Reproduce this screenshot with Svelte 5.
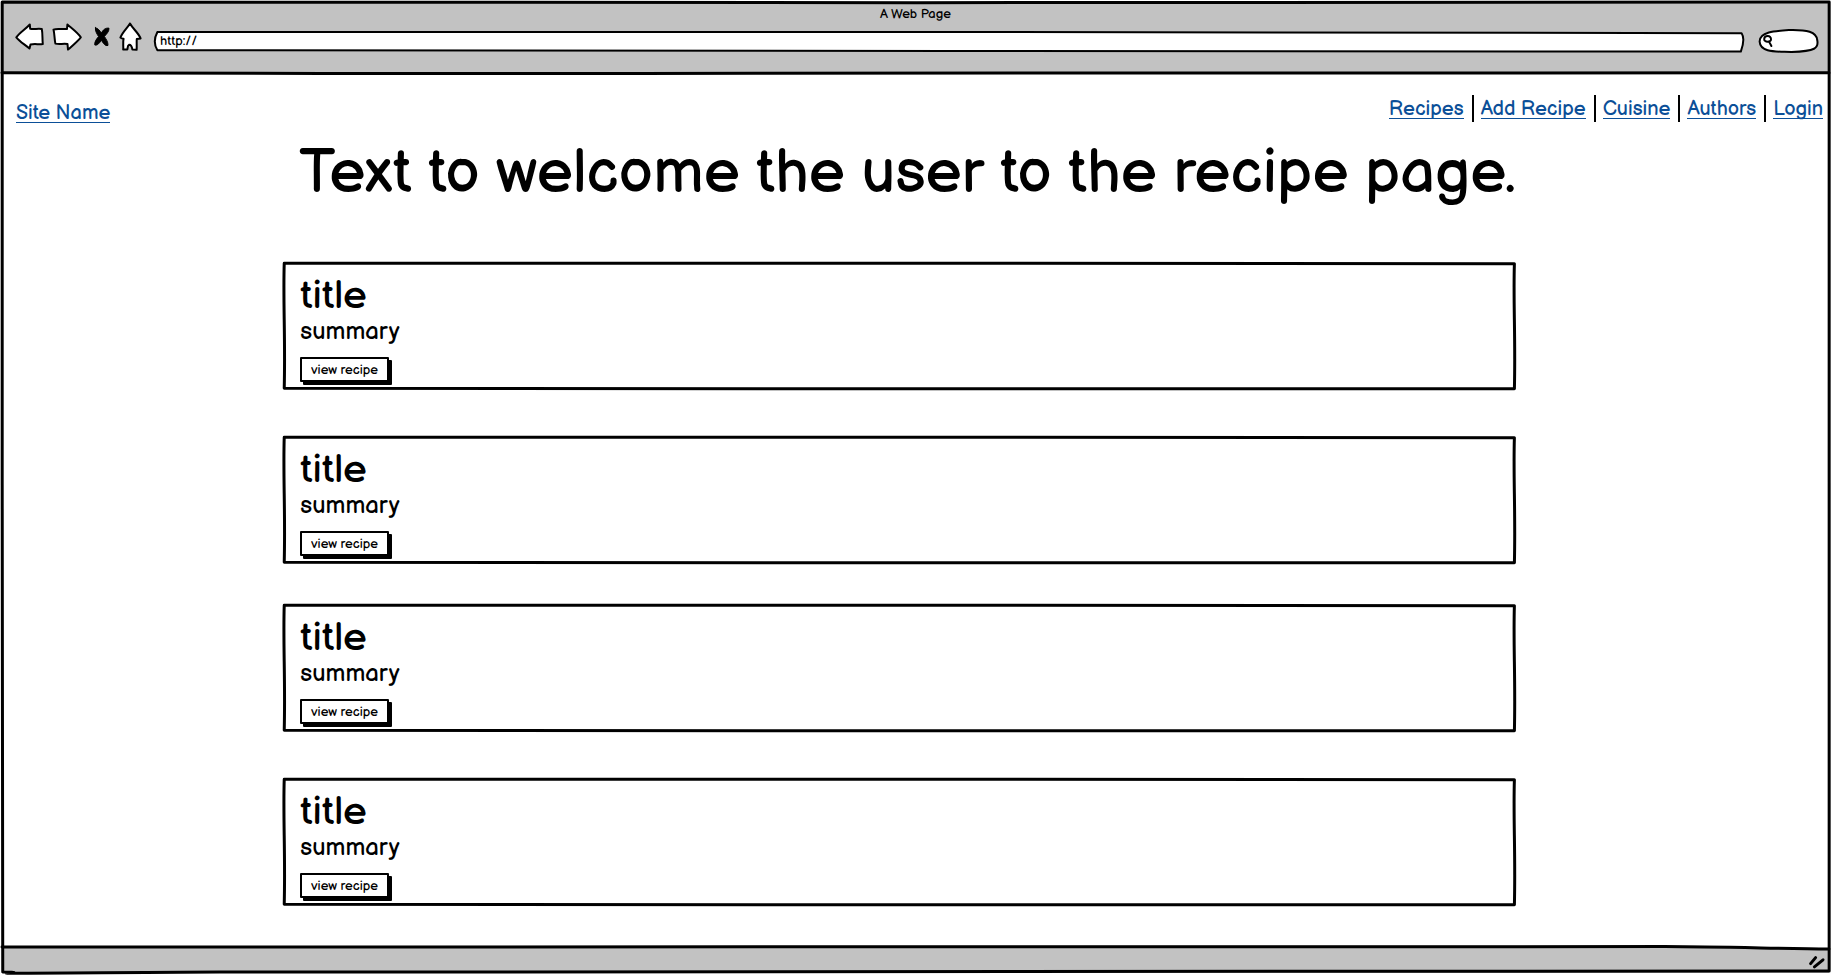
<script>
  const links = ['Recipes', 'Add Recipe', 'Cuisine', 'Authors', 'Login'];
  const recipes = [
    { title: 'title', summary: 'summary' },
    { title: 'title', summary: 'summary' },
    { title: 'title', summary: 'summary' },
    { title: 'title', summary: 'summary' }
  ];
  let address = $state('http://');
  let query = $state('');
</script>

{#snippet outline(d, fill)}
  <svg class="outline" viewBox="0 0 100 100" preserveAspectRatio="none" aria-hidden="true">
    <path {d} {fill} vector-effect="non-scaling-stroke" />
  </svg>
{/snippet}

<div class="browser">
  <header class="chrome">
    <div class="caption">A Web Page</div>
    <div class="toolbar">
      <button class="tool back" aria-label="Back">
        <svg width="30" height="30" viewBox="0 0 30 30">
          <path d="M2.3 15.3 C6 10.5 11 7.6 15.8 2.5 L16.2 6.8 C20 7.5 24 6.3 27.8 7 C28.8 12 28.2 17 28.8 22 C25 22.6 21 21.6 16.5 22.4 L15.5 26.6 C11 22.5 6 20 2.3 15.3Z" />
        </svg>
      </button>
      <button class="tool forward" aria-label="Forward">
        <svg width="30" height="30" viewBox="0 0 30 30">
          <path d="M1.5 7.6 C5 6 10 7.6 15 7 L15.4 2.5 C20 6.5 25.6 10.5 28.8 15.3 C25 20 20.5 23.5 16 27.6 L15.5 22 C11 21.4 7 22.6 3.4 21.6 C2.4 17 2.6 12 1.5 7.6Z" />
        </svg>
      </button>
      <button class="tool stop" aria-label="Stop">
        <svg width="18" height="22" viewBox="0 0 18 22">
          <path class="solid" d="M2.4 1.8 C5 2.2 6.6 4.5 8.4 7 C10 4.2 12 1.6 16 2.2 C16.2 5.6 13.4 8.2 11.4 10.4 C12.8 13 15.2 15.6 15 19.4 C12.2 20.6 10 16.6 8.4 14.4 C6.6 16.6 4.6 19.8 1.8 19 C1.4 15.4 3.6 13 5.6 10.6 C4 8 2 5.2 2.4 1.8Z" />
        </svg>
      </button>
      <button class="tool home" aria-label="Home">
        <svg width="24" height="30" viewBox="0 0 24 30">
          <path d="M12 1.5 C9.5 6 4.6 10 2.4 15.6 C3.4 16.6 4.6 16.6 5.6 16.8 C4.6 20.4 5.6 24 5.2 27.6 L9.4 27.4 C9.8 25.4 9.4 23.6 11 22.8 C13.4 22.6 14 25 14.4 27.6 L18.6 27.8 C19 24 18.4 20.4 18.8 17 L22.6 16.4 C20.6 11 15 7 12 1.5Z" />
        </svg>
      </button>
      <div class="address">
        {@render outline('M0.15 0 C15 0 30 -2 50 0 S85 3 99.85 6 C100.05 30 99.95 65 99.8 98 C80 97 65 96 50 95 S20 92 0.15 91 C-0.05 65 -0.05 30 0.15 0Z', '#fff')}
        <input aria-label="Address" bind:value={address} />
      </div>
      <div class="search">
        {@render outline('M1 52 C1 12 26 8 50 4 C80 2 96 12 97 46 C100 80 94 92 54 96 C30 93 2 100 1 52Z', '#fff')}
        <svg class="lens" width="12" height="14" viewBox="0 0 12 14" aria-hidden="true">
          <path d="M9 5.4 C9 8.4 2 8.6 2.2 5 C2.4 1 9.4 1 9 5.4 M7 7.6 L9.4 12" />
        </svg>
        <input aria-label="Search" bind:value={query} />
      </div>
    </div>
    <svg class="rule" viewBox="0 0 100 4" preserveAspectRatio="none" aria-hidden="true">
      <path d="M0 1.8 C15 2 20 3 35 2.4 S60 2.6 100 1.8" vector-effect="non-scaling-stroke" />
    </svg>
  </header>

  <div class="page">
    <div class="topbar">
      <a class="link site" href="#home">Site Name</a>
      <nav>
        {#each links as name}
          <div class="item"><a class="link" href={'#' + name}>{name}</a></div>
        {/each}
      </nav>
    </div>

    <main>
      <h1>Text to welcome the user to the recipe page.</h1>
      {#each recipes as recipe}
        <article>
          {@render outline('M0.1 1 C30 0.2 70 1.4 99.85 1.4 C99.75 30 99.95 60 99.85 99 C70 98.6 30 99.6 0.1 98.6 C0.2 60 0 30 0.1 1Z', 'none')}
          <h2>{recipe.title}</h2>
          <p>{recipe.summary}</p>
          <button class="view">view recipe</button>
        </article>
      {/each}
    </main>
  </div>

  <footer>
    <svg class="rule" viewBox="0 0 100 4" preserveAspectRatio="none" aria-hidden="true">
      <path class="band" d="M0 1 L92 0.4 L100 3 L100 4 L0 4Z" />
      <path d="M0 2 C30 2.6 60 1.4 91 1.6 C94 1.8 97 3.4 100 4" vector-effect="non-scaling-stroke" />
    </svg>
    <svg class="grip" width="18" height="16" viewBox="0 0 18 16" aria-hidden="true">
      <path d="M2.6 9.6 L7.6 3.6 M6.4 12.8 L15 5.8" />
    </svg>
  </footer>
  {@render outline('M0.12 0.2 C30 0.3 70 0.3 99.9 0.2 C99.8 30 100 70 99.9 99.6 C70 99.7 30 99.5 12 99.7 S3 99.8 0.15 99.7 C0.15 70 0.08 30 0.12 0.2Z', 'none')}
</div>

<style>
  :global(body) {
    background: #fff;
  }
  .browser {
    position: relative;
    display: flex;
    flex-direction: column;
    box-sizing: border-box;
    min-height: 100vh;
    padding: 2px;
    font-family: 'Balsamiq Sans', Lato, sans-serif;
    color: #000;
  }
  button,
  input {
    margin: 0;
    padding: 0;
    border: 0;
    background: none;
    font-family: inherit;
    color: inherit;
    outline: none;
  }
  svg {
    display: block;
  }
  .outline {
    position: absolute;
    inset: 0;
    width: 100%;
    height: 100%;
    overflow: visible;
    pointer-events: none;
  }
  path {
    stroke: #000;
    stroke-width: 3px;
    stroke-linejoin: round;
    stroke-linecap: round;
  }
  .chrome {
    background: #c2c2c2;
  }
  .caption {
    padding-top: 4px;
    text-align: center;
    font-size: 13px;
    line-height: 16px;
  }
  .toolbar {
    display: flex;
    align-items: center;
    height: 30px;
    padding: 0 10px 19px 12px;
  }
  .tool path {
    fill: #fff;
    stroke-width: 2px;
  }
  .tool path.solid {
    fill: #000;
    stroke-width: 1px;
  }
  .forward {
    margin-left: 8px;
  }
  .stop {
    margin-left: 11px;
  }
  .home {
    margin-left: 7px;
  }
  .address {
    position: relative;
    flex: 1;
    height: 20px;
    margin: 9px 15px 0 13px;
  }
  .address path,
  .search path {
    stroke-width: 2px;
  }
  .address input {
    position: relative;
    display: block;
    box-sizing: border-box;
    width: 100%;
    height: 18px;
    padding-left: 5px;
    font-size: 13px;
  }
  .search {
    position: relative;
    display: flex;
    align-items: center;
    width: 60px;
    height: 24px;
    margin-top: 8px;
  }
  .search input {
    position: relative;
    width: 36px;
    font-size: 13px;
  }
  .lens {
    position: relative;
    flex: none;
    margin-left: 3px;
    fill: none;
  }
  .rule {
    width: 100%;
    height: 4px;
    overflow: visible;
    fill: none;
  }
  .chrome .rule {
    background: linear-gradient(#c2c2c2 50%, #fff 50%);
  }
  .page {
    flex: 1;
  }
  .topbar {
    display: flex;
    justify-content: space-between;
    align-items: flex-start;
    padding: 20px 6px 0 14px;
  }
  .link {
    display: block;
    border-bottom: 1px solid #0b4f98;
    font-size: 20px;
    line-height: 18px;
    color: #0b4f98;
    text-decoration: none;
  }
  .site {
    margin-top: 9px;
  }
  nav {
    display: flex;
  }
  .item {
    height: 22px;
    padding: 5px 0 0 7px;
  }
  .item + .item {
    margin-left: 8px;
    border-left: 2px solid #000;
  }
  main {
    padding: 0 17.1% 36px 15.4%;
  }
  h1 {
    margin: 12px 0 49px;
    padding-left: 15px;
    text-align: center;
    font-size: 61px;
    line-height: 78px;
    font-weight: 400;
  }
  article {
    position: relative;
    padding: 12px 17px 8px;
    margin-top: 46px;
  }
  article:nth-of-type(odd) {
    margin-top: 40px;
  }
  h2 {
    margin: 0;
    font-size: 40px;
    line-height: 44px;
    font-weight: 400;
  }
  p {
    margin: 0 0 11px;
    font-size: 24px;
    line-height: 28px;
  }
  .view {
    display: block;
    box-sizing: border-box;
    height: 25px;
    padding: 0 9px;
    border: 2px solid #000;
    border-radius: 1px;
    background: #fff;
    box-shadow: 3px 3px 0 #000;
    font-size: 13px;
    line-height: 20px;
  }
  footer {
    display: flex;
    flex-direction: column;
    align-items: flex-end;
    height: 28px;
    background: linear-gradient(#fff 4px, #c2c2c2 4px);
  }
  .band {
    fill: #c2c2c2;
    stroke: none;
  }
  .grip {
    margin: 5px 3px 0 0;
  }
  .grip path {
    stroke-width: 3px;
  }
</style>
